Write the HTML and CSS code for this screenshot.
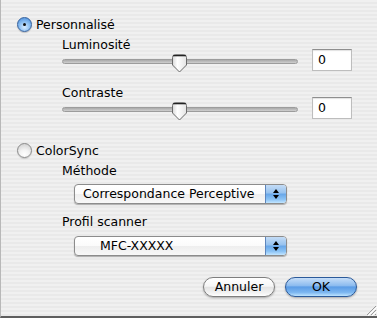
FILE: index.html
```html
<!DOCTYPE html>
<html lang="fr">
<head>
<meta charset="utf-8">
<title>Réglages couleur</title>
<link rel="stylesheet" href="styles.css">
</head>
<body>
<div class="window">
  <div class="radio-row">
    <span class="radio radio-on"></span>
    <span class="radio-text">Personnalisé</span>
  </div>

  <div class="slider-group first">
    <div class="label">Luminosité</div>
    <div class="slider-row">
      <div class="slider">
        <div class="track"></div>
        <svg class="thumb" width="17" height="19" viewBox="0 0 17 19">
          <defs>
            <linearGradient id="tg" x1="0" y1="0" x2="1" y2="0">
              <stop offset="0" stop-color="#d8d8d8"/>
              <stop offset="0.35" stop-color="#ffffff"/>
              <stop offset="1" stop-color="#e4e4e4"/>
            </linearGradient>
          </defs>
          <path d="M1.5 3.5 Q1.5 0.8 4.2 0.8 L12.8 0.8 Q15.5 0.8 15.5 3.5 L15.5 11 L8.5 18 L1.5 11 Z" fill="url(#tg)" stroke="#6a6a6a" stroke-width="1"/>
          <path d="M2.2 1.6 L14.8 1.6" stroke="#222" stroke-width="1.4"/>
        </svg>
      </div>
      <div class="field">0</div>
    </div>
  </div>

  <div class="slider-group second">
    <div class="label">Contraste</div>
    <div class="slider-row">
      <div class="slider">
        <div class="track"></div>
        <svg class="thumb" width="17" height="19" viewBox="0 0 17 19">
          <path d="M1.5 3.5 Q1.5 0.8 4.2 0.8 L12.8 0.8 Q15.5 0.8 15.5 3.5 L15.5 11 L8.5 18 L1.5 11 Z" fill="url(#tg)" stroke="#6a6a6a" stroke-width="1"/>
          <path d="M2.2 1.6 L14.8 1.6" stroke="#222" stroke-width="1.4"/>
        </svg>
      </div>
      <div class="field">0</div>
    </div>
  </div>

  <div class="radio-row colorsync">
    <span class="radio radio-off"></span>
    <span class="radio-text">ColorSync</span>
  </div>

  <div class="popup-group first-popup">
    <div class="label">Méthode</div>
    <div class="popup">
      <span class="popup-text">Correspondance Perceptive</span>
      <span class="popup-arrows">
        <svg width="8" height="14" viewBox="0 0 8 14"><path d="M4 2 L7 6 L1 6 Z M1 8 L7 8 L4 12 Z" fill="#000"/></svg>
      </span>
    </div>
  </div>

  <div class="popup-group second-popup">
    <div class="label">Profil scanner</div>
    <div class="popup">
      <span class="popup-text indent">MFC-XXXXX</span>
      <span class="popup-arrows">
        <svg width="8" height="14" viewBox="0 0 8 14"><path d="M4 2 L7 6 L1 6 Z M1 8 L7 8 L4 12 Z" fill="#000"/></svg>
      </span>
    </div>
  </div>

  <div class="buttons">
    <button class="btn btn-cancel">Annuler</button>
    <button class="btn btn-ok">OK</button>
  </div>

  <svg class="grip" width="12" height="12" viewBox="0 0 12 12">
    <path d="M11 2 L2 11 M11 6 L6 11 M11 10 L10 11" stroke="#9a9a9a" stroke-width="1"/>
    <path d="M12 3 L3 12 M12 7 L7 12" stroke="#ffffff" stroke-width="1"/>
  </svg>
</div>
</body>
</html>
```

FILE: styles.css
```css
html, body {
  margin: 0;
  padding: 0;
}

body {
  font-family: "DejaVu Sans", "Liberation Sans", sans-serif;
  font-size: 12.5px;
  color: #000;
}

.window {
  position: relative;
  width: 377px;
  height: 318px;
  box-sizing: border-box;
  border-left: 1px solid #b8b8b8;
  border-bottom: 2px solid #5e5e5e;
  padding: 17px 0 0 16px;
  background: repeating-linear-gradient(to bottom, #f0f0f0 0, #f0f0f0 2px, #e9e9e9 2px, #e9e9e9 4px);
  display: flex;
  flex-direction: column;
  overflow: hidden;
}

.radio-row {
  display: flex;
  align-items: center;
  height: 15px;
  gap: 4px;
}

.radio-text {
  line-height: 15px;
}

.radio {
  width: 15px;
  height: 15px;
  box-sizing: border-box;
  border-radius: 50%;
  position: relative;
  flex: none;
}

.radio-on {
  border: 1px solid #34609c;
  background: radial-gradient(circle at 50% 70%, #d8ecff 0%, #8ec0f2 45%, #3f86d8 100%);
  box-shadow: 0 1px 1px rgba(0, 0, 0, 0.2);
}

.radio-on::after {
  content: "";
  position: absolute;
  left: 5px;
  top: 5px;
  width: 3px;
  height: 3px;
  border-radius: 50%;
  background: #111;
}

.radio-off {
  border: 1px solid #8a8a8a;
  background: radial-gradient(circle at 50% 80%, #ffffff 0%, #f2f2f2 40%, #c9c9c9 100%);
  box-shadow: 0 1px 1px rgba(0, 0, 0, 0.15);
}

.label {
  line-height: 9px;
  height: 9px;
  white-space: nowrap;
}

.slider-group {
  margin-left: 45px;
}

.slider-group.first {
  margin-top: 8px;
}

.slider-group.second {
  margin-top: 14px;
}

.slider-row {
  display: flex;
  align-items: flex-start;
  gap: 14px;
}

.slider {
  position: relative;
  width: 236px;
  height: 19px;
  margin-top: 6px;
}

.track {
  position: absolute;
  left: 0;
  right: 0;
  top: 4px;
  height: 5px;
  border-radius: 3px;
  box-sizing: border-box;
  border: 1px solid #9c9c9c;
  background: linear-gradient(to bottom, #a9a9a9, #cfcfcf);
}

.thumb {
  position: absolute;
  left: 109px;
  top: -1px;
}

.field {
  width: 40px;
  height: 22px;
  box-sizing: border-box;
  background: #fff;
  border: 1px solid #bdbdbd;
  border-top-color: #8e8e8e;
  box-shadow: inset 0 1px 1px rgba(0, 0, 0, 0.12);
  padding-left: 5px;
  line-height: 20px;
}

.colorsync {
  margin-top: 21px;
}

.popup-group {
  margin-left: 45px;
}

.first-popup {
  margin-top: 8px;
}

.second-popup {
  margin-top: 13px;
}

.popup-group .popup {
  margin-top: 9px;
}

.second-popup .popup {
  margin-top: 10px;
}

.popup {
  margin-left: 12px;
  width: 213px;
  height: 20px;
  box-sizing: border-box;
  display: flex;
  border: 1px solid #8c8c8c;
  border-radius: 4px;
  background: linear-gradient(to bottom, #ffffff 0%, #fbfbfb 50%, #eeeeee 51%, #f8f8f8 100%);
  box-shadow: 0 1px 1px rgba(0, 0, 0, 0.28);
  overflow: hidden;
}

.popup-text {
  flex: 1;
  line-height: 18px;
  padding-left: 8px;
  white-space: nowrap;
}

.popup-text.indent {
  padding-left: 25px;
}

.popup-arrows {
  width: 20px;
  display: flex;
  align-items: center;
  justify-content: center;
  border-left: 1px solid #5d86bd;
  background: linear-gradient(to bottom, #c4dcf6 0%, #96c2ef 45%, #67a6e8 50%, #8cc3f5 80%, #c3e6ff 100%);
}

.buttons {
  display: flex;
  justify-content: flex-end;
  gap: 10px;
  margin-top: 21px;
  margin-right: 20px;
}

.btn {
  width: 72px;
  height: 20px;
  border-radius: 10px;
  font-family: "DejaVu Sans", "Liberation Sans", sans-serif;
  font-size: 12.5px;
  line-height: 18px;
  padding: 0;
  color: #000;
  box-shadow: 0 1px 2px rgba(0, 0, 0, 0.3);
}

.btn-cancel {
  border: 1px solid #7e7e7e;
  background: linear-gradient(to bottom, #ffffff 0%, #f6f6f6 45%, #e4e4e4 52%, #f4f4f4 85%, #ffffff 100%);
}

.btn-ok {
  border: 1px solid #2b5a9a;
  background: linear-gradient(to bottom, #c6def8 0%, #8dbcef 42%, #5b9ce6 50%, #7cb6f0 80%, #bde4ff 100%);
}

.grip {
  position: absolute;
  right: 0;
  bottom: 0;
}
```
